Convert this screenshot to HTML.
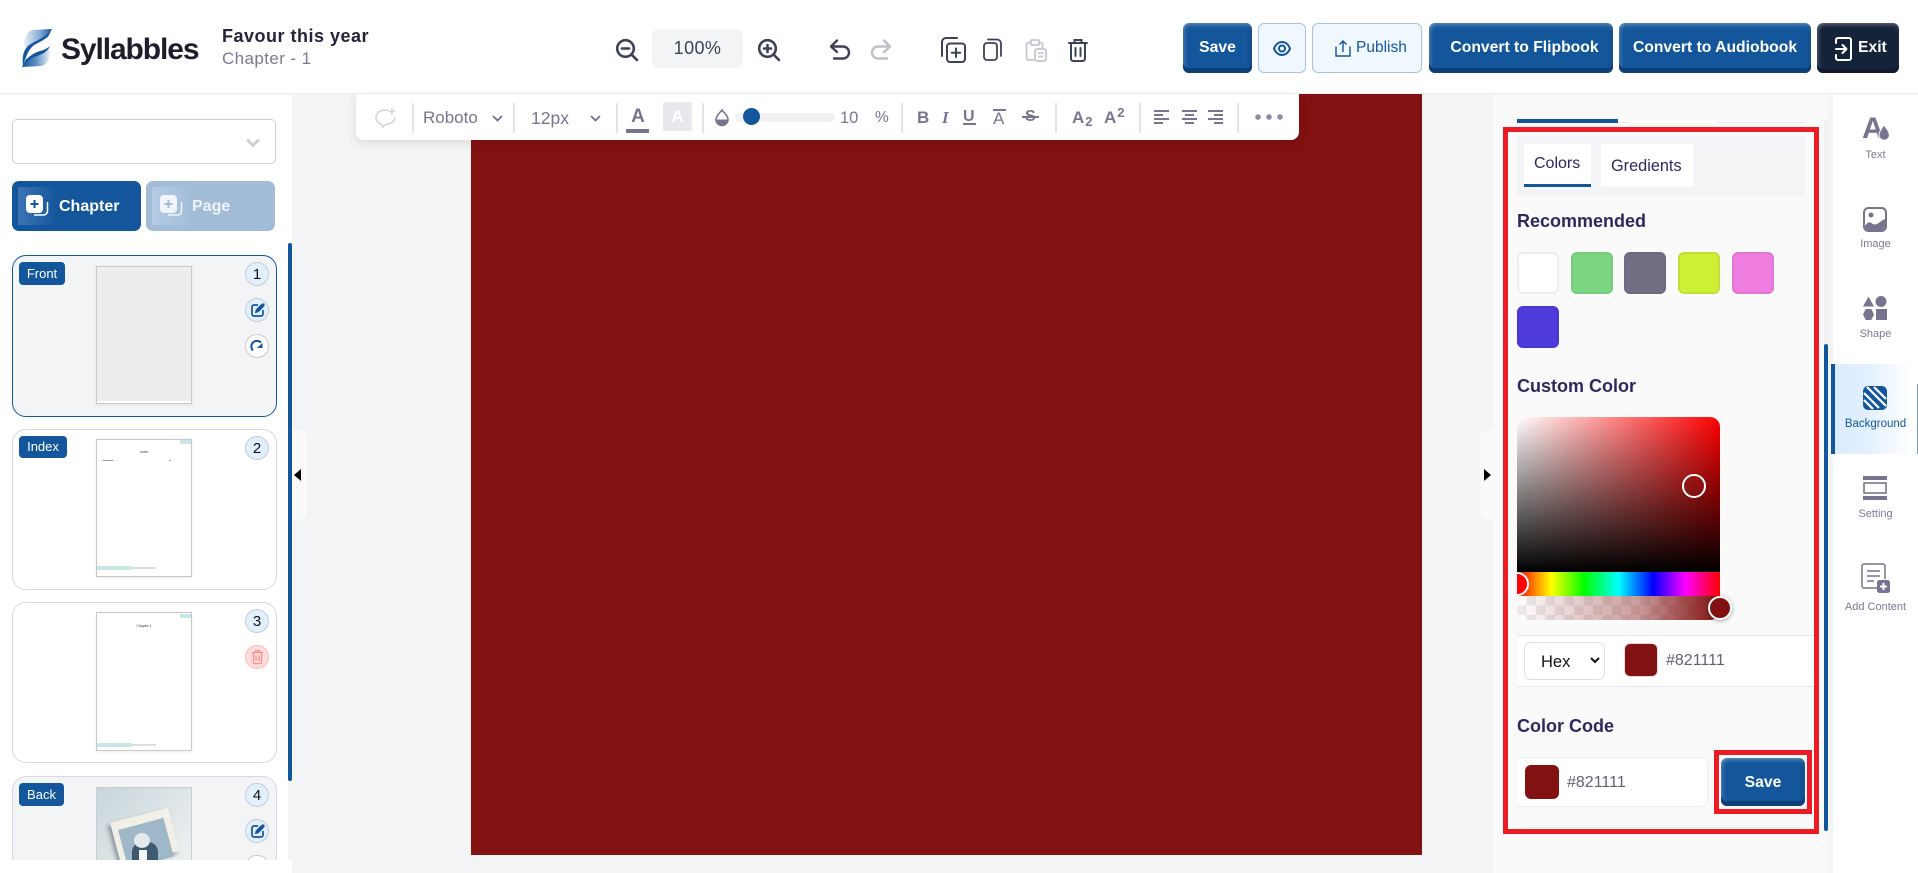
<!DOCTYPE html>
<html><head><meta charset="utf-8"><title>Syllabbles</title>
<style>
*{box-sizing:border-box}
html,body{margin:0;padding:0;width:1918px;height:873px;overflow:hidden;background:#f3f4f6;font-family:"Liberation Sans",sans-serif}
#root{position:relative;width:1918px;height:873px;overflow:hidden;background:#f3f4f6}
.a{position:absolute}
.t{position:absolute;white-space:nowrap;height:20px;line-height:20px}
svg{position:absolute;overflow:visible}
.btn{position:absolute;top:23px;height:50px;background:#14569b;border-radius:6px;color:#fff;font-weight:700;font-size:15.7px;display:flex;align-items:center;justify-content:center;box-shadow:inset 0 -5px 0 #0f3f78,inset 0 4px 4px -2px rgba(255,255,255,.3),inset 4px 0 4px -2px rgba(255,255,255,.18),inset -4px 0 4px -2px rgba(0,0,0,.15)}
.ol{position:absolute;top:23px;height:50px;background:#f0f7ff;border:1px solid #a9c4e2;border-radius:6px;color:#14569b;font-size:15.5px;display:flex;align-items:center}
.sep{position:absolute;top:103px;width:2px;height:30px;background:#e3e4ea}
.tb{color:#767690}
.card{position:absolute;left:12px;width:265px;border:1.5px solid #d5d8e2;border-radius:14px;background:#fff}
.badge{position:absolute;left:19px;height:23px;line-height:23px;background:#14569b;color:#fff;font-size:13px;border-radius:4px;text-align:center}
.thumb{position:absolute;left:96px;width:96px;background:#fff;border:1px solid #c8c8c8;box-shadow:0 1px 3px rgba(0,0,0,.08)}
.circ{position:absolute;left:245px;width:24px;height:24px;border-radius:50%;background:#e2efff;border:1px solid #c6cad4;text-align:center;line-height:23px;font-size:15px;color:#111}
.sw{position:absolute;width:42px;height:42px;border-radius:6px;border:2px solid}
.lab{position:absolute;left:1833px;width:85px;text-align:center;font-size:11px;color:#7a7a93;height:14px;line-height:14px}
.h{position:absolute;left:1517px;font-size:18px;font-weight:700;color:#2b2a5f;height:22px;line-height:22px;white-space:nowrap}
</style></head><body><div id="root">

<!-- header -->
<div class="a" style="left:0;top:0;width:1918px;height:94px;background:#fff;border-bottom:1px solid #eeeff2"></div>
<svg style="left:20px;top:29px" width="34" height="39" viewBox="0 0 34 39">
<defs>
<linearGradient id="l1" x1="0" y1="0" x2="1" y2="0"><stop offset="0" stop-color="#eef2f7"/><stop offset=".6" stop-color="#7ea5d0"/><stop offset="1" stop-color="#14569b"/></linearGradient>
<linearGradient id="l2" x1="0" y1="0" x2="1" y2="0"><stop offset="0" stop-color="#14569b"/><stop offset=".5" stop-color="#5f8fc4"/><stop offset="1" stop-color="#eef2f7"/></linearGradient>
</defs>
<path d="M32 0 L12 1 C6 3 2 12 5 19 C10 16 22 12 28 8Z" fill="url(#l1)"/>
<path d="M2 38 L22 37 C28 35 32 27 29 18 C24 24 12 27 6 30Z" fill="url(#l2)"/>
<path d="M31 1 C29 8 24 11 16 15 C10 18 7 24 3 37 C2 28 3 22 8 17 C14 12 24 10 31 1Z" fill="#14569b"/>
<path d="M30 17 C27 24 20 26 14 28 C10 30 7 33 3 37 C6 28 14 24 20 22 C24 21 28 19 30 17Z" fill="#14569b"/>
</svg>
<div class="t" style="left:61px;top:37px;height:26px;line-height:26px;font-size:30px;font-weight:700;color:#1c1e2b;letter-spacing:-1.1px">Syllabbles</div>
<div class="t" style="left:222px;top:26px;font-size:18px;font-weight:700;color:#23263a;letter-spacing:.5px">Favour this year</div>
<div class="t" style="left:222px;top:49px;font-size:17px;color:#7a7a93;letter-spacing:.4px">Chapter - 1</div>

<!-- zoom -->
<svg style="left:615px;top:38px" width="24" height="24" viewBox="0 0 24 24" fill="none" stroke="#3c4257" stroke-width="2.6"><circle cx="10.5" cy="10.5" r="8.3"/><path d="M16.5 16.5L22 22M7 10.5h7" stroke-linecap="round"/></svg>
<div class="a" style="left:652px;top:29px;width:91px;height:39px;background:#f3f4f6;border-radius:7px;text-align:center;line-height:39px;font-size:18px;letter-spacing:.4px;color:#3c4257">100%</div>
<svg style="left:757px;top:38px" width="24" height="24" viewBox="0 0 24 24" fill="none" stroke="#3c4257" stroke-width="2.6"><circle cx="10.5" cy="10.5" r="8.3"/><path d="M16.5 16.5L22 22M7 10.5h7M10.5 7v7" stroke-linecap="round"/></svg>
<!-- undo redo -->
<svg style="left:829px;top:39px" width="22" height="21" viewBox="0 0 22 21" fill="none" stroke="#3c4257" stroke-width="2.4" stroke-linecap="round" stroke-linejoin="round"><path d="M8 1.5L2 7.5l6 5.5M2.5 7.5H14a6 6 0 0 1 0 12H5"/></svg>
<svg style="left:870px;top:39px" width="22" height="21" viewBox="0 0 22 21" fill="none" stroke="#bfc1ca" stroke-width="2.4" stroke-linecap="round" stroke-linejoin="round"><path d="M14 1.5l6 6-6 5.5M19.5 7.5H8a6 6 0 0 0 0 12h9"/></svg>
<!-- copy icons -->
<svg style="left:941px;top:37px" width="25" height="26" viewBox="0 0 25 26" fill="none" stroke="#3c4257" stroke-width="2" stroke-linecap="round"><rect x="6" y="6.500" width="18" height="18.500" rx="3"/><path d="M1 19V5a4 4 0 0 1 4-4h11M15 11.500v8.500M10.800 15.700h8.400"/></svg>
<svg style="left:983px;top:38px" width="19" height="23" viewBox="0 0 19 23" fill="none" stroke="#3c4257" stroke-width="1.800"><rect x="1" y="5" width="13" height="17" rx="3"/><path d="M5 1.500h9a4 4 0 0 1 4 4V18" stroke-linecap="round"/></svg>
<svg style="left:1025px;top:39px" width="22" height="23" viewBox="0 0 22 23" fill="none" stroke="#c4c6ce" stroke-width="1.800"><path d="M6 3.500H3.500a2 2 0 0 0-2 2V19a2 2 0 0 0 2 2H9M14 3.500h1.500a2 2 0 0 1 2 2V9"/><rect x="6" y="1" width="8" height="5" rx="1"/><rect x="10" y="10" width="11" height="12" rx="2"/><path d="M13 14h5M13 17.500h5"/></svg>
<svg style="left:1067px;top:38px" width="22" height="24" viewBox="0 0 22 24" fill="none" stroke="#3c4257" stroke-width="2" stroke-linecap="round"><path d="M2 5h18M7.500 5V2h7v3M4 5v15.500a2.500 2.500 0 0 0 2.500 2.500h9a2.500 2.500 0 0 0 2.500-2.500V5M8.500 10v8M13.500 10v8"/></svg>

<!-- header buttons -->
<div class="btn" style="left:1183px;width:69px">Save</div>
<div class="ol" style="left:1258px;width:48px;justify-content:center"><svg style="left:14px;top:17px" width="18" height="15" viewBox="0 0 18 15" fill="none" stroke="#14569b" stroke-width="2"><path d="M1 7.500C2.500 3.500 5.500 1 9 1s6.500 2.500 8 6.500C15.500 11.500 12.500 14 9 14S2.500 11.500 1 7.500Z"/><circle cx="9" cy="7.500" r="3"/></svg></div>
<div class="ol" style="left:1312px;width:110px"><svg style="left:22px;top:16px" width="16" height="17" viewBox="0 0 16 17" fill="none" stroke="#14569b" stroke-width="1.400"><path d="M1 6.500V16h14V6.500M8 12V1M4.500 4.500L8 1l3.500 3.500"/></svg><span style="position:absolute;left:43px">Publish</span></div>
<div class="btn" style="left:1429px;width:184px;padding-left:7px">Convert to Flipbook</div>
<div class="btn" style="left:1619px;width:192px">Convert to Audiobook</div>
<div class="btn" style="left:1817px;width:82px;background:#15233a;box-shadow:inset 0 -4px 0 #101b2d,inset 0 4px 4px -2px rgba(255,255,255,.28),inset 4px 0 4px -2px rgba(255,255,255,.2)"><svg style="left:18px;top:14px" width="17" height="24" viewBox="0 0 17 24" fill="none" stroke="#fff" stroke-width="2" stroke-linecap="round" stroke-linejoin="round"><path d="M1 6V3a2 2 0 0 1 2-2h11a2 2 0 0 1 2 2v18a2 2 0 0 1-2 2H3a2 2 0 0 1-2-2v-3M1 12h10M7.500 8l4 4-4 4"/></svg><span style="position:absolute;left:41px">Exit</span></div>

<!-- left sidebar -->
<div class="a" style="left:0;top:95px;width:292px;height:778px;background:#fff"></div>
<div class="a" style="left:12px;top:119px;width:264px;height:45px;border:1px solid #cfcfd2;border-radius:5px;background:#fff"></div>
<svg style="left:246px;top:138px" width="14" height="10" viewBox="0 0 14 10" fill="none" stroke="#cfcfd2" stroke-width="2.800"><path d="M1 1.500l6 6 6-6"/></svg>

<div class="a" style="left:12px;top:181px;width:129px;height:50px;border-radius:7px;background:#14569b;overflow:hidden"><div class="a" style="left:6px;top:6px;width:40px;height:38px;background:linear-gradient(90deg,#3a74b3,#14569b)"></div></div>
<svg style="left:26px;top:195px" width="23" height="22" viewBox="0 0 23 22"><rect x="0" y="0" width="17" height="18" rx="4" fill="#fff"/><path d="M8.500 5v8M4.500 9h8" stroke="#14569b" stroke-width="2"/><path d="M21.500 7v9a4 4 0 0 1-4 4H8" stroke="#fff" stroke-width="1.500" fill="none"/></svg>
<div class="t" style="left:59px;top:197px;font-size:16px;font-weight:700;color:#fff">Chapter</div>

<div class="a" style="left:146px;top:181px;width:129px;height:50px;border-radius:7px;background:#a3bcd8;overflow:hidden"><div class="a" style="left:6px;top:6px;width:40px;height:38px;background:linear-gradient(90deg,#b4cce5,#a3bcd8)"></div></div>
<svg style="left:160px;top:195px" width="23" height="22" viewBox="0 0 23 22"><rect x="0" y="0" width="17" height="18" rx="4" fill="#f0f5fa"/><path d="M8.500 5v8M4.500 9h8" stroke="#a3bcd8" stroke-width="2"/><path d="M21.500 7v9a4 4 0 0 1-4 4H8" stroke="#f0f5fa" stroke-width="1.500" fill="none"/></svg>
<div class="t" style="left:192px;top:197px;font-size:16px;font-weight:700;color:#eef3f9">Page</div>

<!-- cards -->
<div class="card" style="top:255px;height:162px;background:#f3f4f6;border-color:#14569b"></div>
<div class="badge" style="top:262px;width:46px">Front</div>
<div class="thumb" style="top:266px;height:138px;background:#eeedeb;border-bottom:3px solid #fff;outline:1px solid #c8c8c8;outline-offset:-1px"></div>
<div class="circ" style="top:262px">1</div>
<div class="circ" style="top:298px"></div>
<svg style="left:251px;top:303px" width="14" height="14" viewBox="0 0 14 14" fill="none" stroke="#14569b" stroke-width="1.700"><path d="M7 2H3a2 2 0 0 0-2 2v7a2 2 0 0 0 2 2h7a2 2 0 0 0 2-2V7"/><path d="M5 9l.5-2L10 2.500l1.500 1.500L7 8.500z" fill="#14569b"/><circle cx="12" cy="2" r="1.600" fill="#14569b" stroke="none"/></svg>
<div class="circ" style="top:334px;background:#fff"></div>
<svg style="left:251px;top:340px" width="13" height="12" viewBox="0 0 13 12" fill="none" stroke="#14569b" stroke-width="2"><path d="M2 10.500A5 5 0 0 1 10 2.500"/><path d="M13 7H7.500L13 2z" fill="#14569b" stroke="none" transform="translate(-1.500 1)"/></svg>

<div class="card" style="top:429px;height:161px"></div>
<div class="badge" style="top:436px;width:48px;height:22px;line-height:22px">Index</div>
<div class="thumb" style="top:439px;height:138px"></div>
<div class="a" style="left:180px;top:440px;width:11px;height:4px;background:#c7e8e6"></div>
<div class="t" style="left:96px;top:442px;width:96px;text-align:center;font-size:3.500px;color:#444">Index</div>
<div class="a" style="left:103px;top:460px;width:10px;height:1px;background:#999"></div>
<div class="a" style="left:169px;top:460px;width:2px;height:1px;background:#999"></div>
<div class="a" style="left:97px;top:566px;width:59px;height:2px;margin-top:1px;background:#ddd"></div>
<div class="a" style="left:97px;top:566px;width:35px;height:4px;background:#c7e8e6"></div>
<div class="circ" style="top:436px">2</div>

<div class="card" style="top:602px;height:161px"></div>
<div class="thumb" style="top:612px;height:139px"></div>
<div class="a" style="left:180px;top:614px;width:11px;height:4px;background:#c7e8e6"></div>
<div class="t" style="left:96px;top:616px;width:96px;text-align:center;font-size:3.500px;color:#444">Chapter 1</div>
<div class="a" style="left:97px;top:744px;width:59px;height:2px;background:#ddd"></div>
<div class="a" style="left:97px;top:743px;width:35px;height:4px;background:#c7e8e6"></div>
<div class="circ" style="top:609px">3</div>
<div class="circ" style="top:645px;background:#ffdcdc;border-color:#ffb9b9"></div>
<svg style="left:252px;top:650px" width="11" height="14" viewBox="0 0 11 14" fill="none" stroke="#ff8f8f" stroke-width="1.300"><path d="M0 2.500h11M3.500 2.500V.8h4v1.700M1.500 2.500v10a1 1 0 0 0 1 1h6a1 1 0 0 0 1-1v-10M4 5.500v5.500M7 5.500v5.500"/></svg>

<div class="card" style="top:776px;height:84px;background:#f3f4f6;border-bottom:0;border-radius:14px 14px 0 0"></div>
<div class="badge" style="top:783px;width:45px">Back</div>
<div class="a" style="left:96px;top:787px;width:96px;height:73px;overflow:hidden;background:linear-gradient(135deg,#c8d6da,#e3e9ea 70%,#eef1f1);border:1px solid #c8cfd0;border-bottom:0">
<div class="a" style="left:13px;top:35px;width:60px;height:45px;background:#f1efe6;transform-origin:0 0;transform:rotate(-15deg);box-shadow:-3px 2px 4px rgba(60,70,80,.5)"></div>
<div class="a" style="left:21px;top:42px;width:47px;height:40px;background:#9fb8c8;transform-origin:0 0;transform:rotate(-15deg)"></div>
<div class="a" style="left:35px;top:54px;width:26px;height:19px;background:#3c5b6e;border-radius:10px 10px 0 0"></div>
<div class="a" style="left:37px;top:45px;width:16px;height:15px;background:#e3e9ec;border-radius:50%"></div>
<div class="a" style="left:42px;top:62px;width:8px;height:11px;background:#f5f7f8"></div>
</div>
<div class="circ" style="top:783px">4</div>
<div class="circ" style="top:819px"></div>
<svg style="left:251px;top:824px" width="14" height="14" viewBox="0 0 14 14" fill="none" stroke="#14569b" stroke-width="1.700"><path d="M7 2H3a2 2 0 0 0-2 2v7a2 2 0 0 0 2 2h7a2 2 0 0 0 2-2V7"/><path d="M5 9l.5-2L10 2.500l1.500 1.500L7 8.500z" fill="#14569b"/><circle cx="12" cy="2" r="1.600" fill="#14569b" stroke="none"/></svg>
<div class="a" style="left:248px;top:855px;width:18px;height:5px;background:#fff;border:1px solid #c6cad4;border-bottom:0;border-radius:9px 9px 0 0/5px 5px 0 0"></div>

<!-- left scrollbar -->
<div class="a" style="left:288px;top:243px;width:4px;height:617px;background:#f3f4f6"></div>
<div class="a" style="left:288px;top:243px;width:4px;height:538px;background:#14569b;border-radius:2px"></div>
<div class="a" style="left:292px;top:430px;width:15px;height:90px;background:#fafafa;border-radius:0 8px 8px 0"></div>
<div class="a" style="left:294px;top:469px;width:0;height:0;border-top:6px solid transparent;border-bottom:6px solid transparent;border-right:7px solid #000"></div>

<!-- canvas -->
<div class="a" style="left:471px;top:94px;width:951px;height:761px;background:#821111"></div>

<!-- toolbar -->
<div class="a" style="left:356px;top:94px;width:943px;height:46px;background:#fff;border-radius:0 0 8px 8px;box-shadow:0 3px 10px rgba(0,0,0,.1)"></div>
<svg style="left:375px;top:107px" width="22" height="22" viewBox="0 0 22 22" fill="none" stroke="#d3d5dc" stroke-width="1.600"><path d="M14 3.500C13 3.200 12 3 10.500 3 5 3 1 6 1 10.500c0 3.500 2.500 6 5.500 6.800L8 20l2.500-2.600c5.500 0 9-3 9.500-7"/><path d="M17 1v7M13.500 4.500h7"/></svg>
<div class="sep" style="left:412px"></div>
<div class="t tb" style="left:423px;top:108px;font-size:17px">Roboto</div>
<svg style="left:492px;top:115px" width="11" height="7" viewBox="0 0 11 7" fill="none" stroke="#6f6f88" stroke-width="1.700"><path d="M1 1l4.500 4.500L10 1"/></svg>
<div class="sep" style="left:513px"></div>
<div class="t tb" style="left:531px;top:108px;font-size:17.500px">12px</div>
<svg style="left:590px;top:115px" width="11" height="7" viewBox="0 0 11 7" fill="none" stroke="#6f6f88" stroke-width="1.700"><path d="M1 1l4.500 4.500L10 1"/></svg>
<div class="sep" style="left:616px"></div>
<div class="t tb" style="left:628px;top:107px;width:20px;text-align:center;font-size:19px;font-weight:700">A</div>
<div class="a" style="left:626px;top:129px;width:23px;height:4px;background:#75758f"></div>
<div class="a" style="left:663px;top:102px;width:29px;height:29px;background:#e8e9ed;border-radius:2px;color:#fff;font-size:17px;font-weight:700;text-align:center;line-height:29px">A</div>
<div class="sep" style="left:702px"></div>
<svg style="left:715px;top:109px" width="14" height="17" viewBox="0 0 14 17"><path d="M7 1C5 4 1 6.500 1 10.500a6 6 0 0 0 12 0C13 6.500 9 4 7 1Z" fill="#fff" stroke="#76768f" stroke-width="1.600"/><path d="M1 10.500h12a6 6 0 0 1-12 0Z" fill="#76768f"/></svg>
<div class="a" style="left:735px;top:113px;width:100px;height:9px;background:#f1f1f3;border-radius:5px"></div>
<div class="a" style="left:743px;top:108px;width:17px;height:17px;background:#14569b;border-radius:50%"></div>
<div class="t tb" style="left:840px;top:108px;font-size:16.500px">10</div>
<div class="t tb" style="left:875px;top:108px;font-size:15.500px">%</div>
<div class="sep" style="left:901px"></div>
<div class="t tb" style="left:917px;top:108px;font-size:17px;font-weight:700">B</div>
<div class="t tb" style="left:942px;top:108px;font-size:17px;font-weight:700;font-style:italic;font-family:'Liberation Serif',serif">I</div>
<div class="t tb" style="left:963px;top:107px;font-size:16px;font-weight:700">U</div>
<div class="a" style="left:963px;top:123px;width:13px;height:2px;background:#75758f"></div>
<div class="a" style="left:993px;top:109px;width:13px;height:2px;background:#75758f"></div>
<div class="t tb" style="left:993px;top:109px;font-size:17px">A</div>
<div class="t tb" style="left:1025px;top:107px;font-size:16px;font-weight:700">S</div>
<div class="a" style="left:1022px;top:116px;width:17px;height:2px;background:#75758f"></div>
<div class="sep" style="left:1055px"></div>
<div class="t tb" style="left:1072px;top:108px;font-size:17px;font-weight:700">A<span style="font-size:13px;position:relative;top:3px;margin-left:1px">2</span></div>
<div class="t tb" style="left:1104px;top:108px;font-size:17px;font-weight:700">A<span style="font-size:13px;position:relative;top:-6px;margin-left:1px">2</span></div>
<div class="sep" style="left:1139px"></div>
<svg style="left:1154px;top:110px" width="70" height="15" viewBox="0 0 70 15" fill="#75758f"><path d="M0 0h15v2H0zM0 4h9v2H0zM0 8h15v2H0zM0 12h9v2H0zM28 0h15v2H28zM31 4h9v2h-9zM28 8h15v2H28zM31 12h9v2h-9zM54 0h15v2H54zM60 4h9v2h-9zM54 8h15v2H54zM60 12h9v2h-9z"/></svg>
<div class="sep" style="left:1237px"></div>
<svg style="left:1255px;top:114px" width="28" height="6" viewBox="0 0 28 6" fill="#8c8ca2"><circle cx="3" cy="3" r="2.800"/><circle cx="14" cy="3" r="2.800"/><circle cx="25" cy="3" r="2.800"/></svg>

<!-- right handle -->
<div class="a" style="left:1480px;top:430px;width:14px;height:90px;background:#fafafa;border-radius:8px 0 0 8px"></div>
<div class="a" style="left:1484px;top:469px;width:0;height:0;border-top:6px solid transparent;border-bottom:6px solid transparent;border-left:7px solid #000"></div>

<!-- right panel -->
<div class="a" style="left:1493px;top:95px;width:335px;height:778px;background:#fafafa"></div>
<div class="a" style="left:1828px;top:95px;width:5px;height:778px;background:#f3f4f6"></div>
<div class="a" style="left:1517px;top:122px;width:288px;height:1px;background:#e6e6f5"></div>
<div class="a" style="left:1629px;top:119px;width:88px;height:4px;background:#fff"></div>
<div class="a" style="left:1517px;top:119px;width:101px;height:4px;background:#14569b"></div>
<div class="a" style="left:1824px;top:119px;width:4px;height:712px;background:#f1f1f4"></div>
<div class="a" style="left:1824px;top:344px;width:4px;height:487px;background:#14569b;border-radius:2px"></div>

<div class="a" style="left:1517px;top:136px;width:288px;height:60px;background:#f3f4f6"></div>
<div class="a" style="left:1524px;top:144px;width:67px;height:43px;background:#fff;border-bottom:3px solid #14569b"></div>
<div class="t" style="left:1534px;top:154px;font-size:16px;color:#2c2a62">Colors</div>
<div class="a" style="left:1601px;top:144px;width:92px;height:43px;background:#fff"></div>
<div class="t" style="left:1611px;top:156px;font-size:16.300px;color:#2c2a62">Gredients</div>

<div class="h" style="top:210px">Recommended</div>
<div class="sw" style="left:1517px;top:252px;background:#fff;border-color:#eeeeee"></div>
<div class="sw" style="left:1571px;top:252px;background:#7cd580;border-color:#76cc7a"></div>
<div class="sw" style="left:1624px;top:252px;background:#706f83;border-color:#6b6a7e"></div>
<div class="sw" style="left:1678px;top:252px;background:#ccf035;border-color:#c2e032"></div>
<div class="sw" style="left:1732px;top:252px;background:#ee7ddf;border-color:#e177d4"></div>
<div class="sw" style="left:1517px;top:306px;background:#4f3bdb;border-color:#4a38cf"></div>

<div class="h" style="top:375px">Custom Color</div>

<!-- picker -->
<div class="a" style="left:1517px;top:417px;width:203px;height:155px;border-radius:10px 10px 0 0;background:linear-gradient(to top,#000,rgba(0,0,0,0)),linear-gradient(to right,#fff,#f00)"></div>
<div class="a" style="left:1517px;top:572px;width:203px;height:24px;overflow:hidden;background:linear-gradient(90deg,#f00 0%,#ff0 17%,#0f0 33%,#0ff 50%,#00f 67%,#f0f 83%,#f00 100%)"><div class="a" style="left:-12px;top:0;width:24px;height:24px;border-radius:50%;background:#f00;border:2px solid #fff"></div></div>
<div class="a" style="left:1517px;top:596px;width:203px;height:24px;border-radius:0 0 10px 10px;background:linear-gradient(90deg,rgba(130,17,17,0),rgba(130,17,17,.42) 60%,#821111),repeating-conic-gradient(#ececec 0 25%,#fff 0 50%) 0 0/19px 19px"></div>
<div class="a" style="left:1682px;top:474px;width:24px;height:24px;border-radius:50%;border:2px solid #fff"></div>
<div class="a" style="left:1708px;top:596px;width:24px;height:24px;border-radius:50%;background:#821111;border:2.500px solid #fff;box-shadow:0 1px 4px rgba(0,0,0,.35)"></div>

<div class="a" style="left:1517px;top:635px;width:297px;height:52px;background:#fff;border-top:1px solid #e8e8f4;border-bottom:1px solid #e8e8f4"></div>
<div class="a" style="left:1524px;top:642px;width:81px;height:38px;background:#fff;border:1px solid #dcdfe8;border-radius:7px"></div>
<div class="t" style="left:1541px;top:652px;font-size:16.500px;color:#111">Hex</div>
<svg style="left:1590px;top:657px" width="10" height="7" viewBox="0 0 10 7" fill="none" stroke="#111" stroke-width="2"><path d="M1 1l4 4 4-4"/></svg>
<div class="a" style="left:1624px;top:643px;width:34px;height:34px;background:#821111;border-radius:6px;border:1px solid #e8dcdc"></div>
<div class="t" style="left:1666px;top:651px;font-size:16px;color:#5f6278">#821111</div>

<div class="h" style="top:715px">Color Code</div>
<div class="a" style="left:1517px;top:757px;width:191px;height:50px;background:#fff;border:1px solid #eeeef8;border-left:0;border-radius:0 8px 8px 0"></div>
<div class="a" style="left:1525px;top:765px;width:34px;height:34px;background:#821111;border-radius:6px"></div>
<div class="t" style="left:1567px;top:773px;font-size:16px;color:#5f6278">#821111</div>
<div class="btn" style="left:1721px;top:758px;width:84px;height:48px;padding-top:1px">Save</div>

<!-- red annotation -->
<div class="a" style="left:1503px;top:127px;width:316px;height:707px;border:5px solid #ed1c24"></div>
<div class="a" style="left:1714px;top:750px;width:98px;height:64px;border:5px solid #ed1c24"></div>

<!-- right tools -->
<div class="a" style="left:1833px;top:95px;width:85px;height:778px;background:#fff"></div>
<svg style="left:1862px;top:115px" width="28" height="26" viewBox="0 0 28 26"><text x="0" y="23" font-family="Liberation Sans,sans-serif" font-size="30" font-weight="700" fill="#75758f">A</text><path d="M22 10c-2 3-5 6-5 10a5.200 5.200 0 0 0 10.400 0c0-4-3.400-7-5.400-10Z" fill="#75758f" stroke="#fff" stroke-width="1"/></svg>
<div class="lab" style="top:148px">Text</div>
<svg style="left:1863px;top:207px" width="24" height="25" viewBox="0 0 24 25"><rect x="1" y="1" width="22" height="23" rx="4.500" fill="#fff" stroke="#75758f" stroke-width="2"/><circle cx="8" cy="8" r="2.500" fill="#75758f"/><path d="M2 19c3-5 5-4 8-2 4 2 7-3 12-5v8a3 3 0 0 1-3 3H5a3 3 0 0 1-3-3Z" fill="#75758f"/></svg>
<div class="lab" style="top:237px">Image</div>
<svg style="left:1863px;top:296px" width="24" height="24" viewBox="0 0 24 24" fill="#75758f"><path d="M5.500 0.500L11 10.500H0Z"/><circle cx="18" cy="5.500" r="5.500"/><path d="M2.700 13h5.600L11 18.500 8.300 24H2.700L0 18.500Z"/><rect x="13" y="13" width="11" height="11"/></svg>
<div class="lab" style="top:327px">Shape</div>

<div class="a" style="left:1831px;top:364px;width:87px;height:90px;background:linear-gradient(90deg,#dcecff 0%,#e1eeff 35%,#fbfdff 85%,#fff 100%);border-left:4px solid #14569b"></div>
<svg style="left:1863px;top:386px" width="24" height="24" viewBox="0 0 24 24"><rect width="24" height="24" rx="5" fill="#14569b"/><path d="M4 1l19 19M1 7l15 15M11 1l12 12M1 14l9 9" stroke="#fff" stroke-width="2.200"/></svg>
<div class="lab" style="top:417px;color:#14569b;font-size:11.500px">Background</div>
<div class="a" style="left:1917px;top:384px;width:1px;height:70px;background:#14569b;opacity:.6"></div>

<svg style="left:1863px;top:476px" width="24" height="24" viewBox="0 0 24 24"><rect x="0" y="0" width="24" height="4" fill="#75758f"/><rect x="0" y="20" width="24" height="4" fill="#75758f"/><rect x="1" y="7" width="22" height="10" fill="#fff" stroke="#75758f" stroke-width="1.600"/></svg>
<div class="lab" style="top:507px">Setting</div>
<svg style="left:1861px;top:563px" width="29" height="30" viewBox="0 0 29 30" fill="none"><path d="M16 25H3a2 2 0 0 1-2-2V3a2 2 0 0 1 2-2h19a2 2 0 0 1 2 2v13" stroke="#75758f" stroke-width="1.500"/><path d="M6 8h13M6 13h13M6 18h7" stroke="#75758f" stroke-width="1.600"/><rect x="16" y="17" width="13" height="13" rx="2.500" fill="#75758f"/><path d="M22.500 20v7M19 23.500h7" stroke="#fff" stroke-width="2"/></svg>
<div class="lab" style="top:600px">Add Content</div>

</div></body></html>
